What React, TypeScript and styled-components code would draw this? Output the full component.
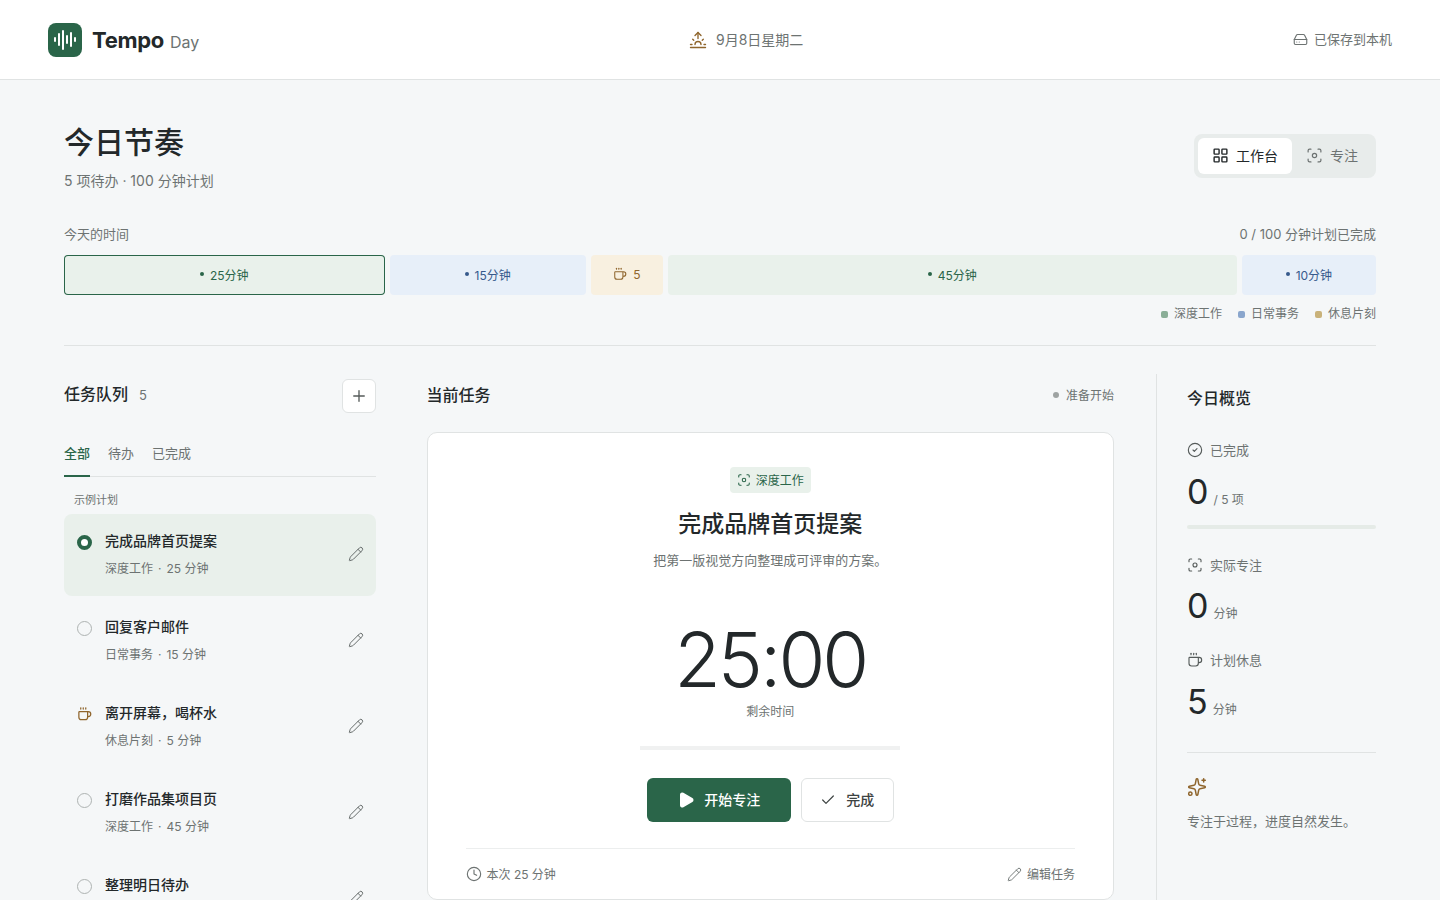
import * as React from 'react';
import styled, {createGlobalStyle} from 'styled-components';
import {
    AudioLines, Check, CircleCheck, Clock, Coffee, Focus, HardDrive, LayoutGrid,
    Pencil, Play, Plus, Sparkles, Sunrise,
} from 'lucide-react';

const GREEN = '#2a6549';
const INK = '#23282a';
const MUTED = '#6d7372';
const LINE = '#e0e3e3';
const BROWN = '#8f652c';

const Global = createGlobalStyle`
    html, body {
        margin: 0;
        height: 100%;
        overflow: hidden;
        background: #f5f7f8;
        color: ${INK};
        font-family: Inter, "Noto Sans CJK SC", sans-serif;
    }
    * { box-sizing: border-box; }
`;

const Page = styled.div`
    height: 100vh;
    overflow: hidden;
`;

const Header = styled.header`
    height: 80px;
    padding: 0 48px;
    display: flex;
    align-items: center;
    justify-content: space-between;
    background: #fff;
    border-bottom: 1px solid ${LINE};
`;

const Brand = styled.div`
    display: flex;
    align-items: center;
    gap: 10px;
`;

const LogoMark = styled.div`
    width: 34px;
    height: 34px;
    border-radius: 8px;
    background: ${GREEN};
    color: #fff;
    display: flex;
    align-items: center;
    justify-content: center;
`;

const BrandName = styled.div`
    font-size: 22px;
    font-weight: 700;
    letter-spacing: -0.3px;
    padding-top: 1px;
    span {
        margin-left: 6px;
        font-size: 16px;
        font-weight: 400;
        letter-spacing: 0;
        color: ${MUTED};
    }
`;

const HeaderDate = styled.div`
    padding-bottom: 2px;
    display: flex;
    align-items: center;
    gap: 9px;
    font-size: 14px;
    color: ${MUTED};
    svg {
        margin-top: 2px;
        color: ${BROWN};
    }
`;

const SavedNote = styled.div`
    padding-bottom: 2px;
    display: flex;
    align-items: center;
    gap: 6px;
    font-size: 13px;
    color: ${MUTED};
    svg { margin-top: 2px; }
`;

const Main = styled.main`
    padding: 44px 64px 0;
`;

const TitleRow = styled.div`
    display: flex;
    align-items: flex-start;
    justify-content: space-between;
`;

const PageTitle = styled.h1`
    margin: 0;
    font-size: 30px;
    line-height: 36px;
    font-weight: 500;
`;

const PageSub = styled.div`
    margin-top: 11px;
    font-size: 14px;
    line-height: 20px;
    color: ${MUTED};
`;

const ViewSwitch = styled.div`
    margin-top: 10px;
    display: flex;
    padding: 4px;
    border-radius: 8px;
    background: #e8eceb;
`;

const ViewButton = styled.div<{$active?: boolean}>`
    height: 36px;
    padding: 0 14px 3px;
    display: flex;
    align-items: center;
    gap: 7px;
    border-radius: 6px;
    font-size: 14px;
    background: ${p => (p.$active ? '#fff' : 'transparent')};
    color: ${p => (p.$active ? INK : MUTED)};
    svg { margin-top: 2px; }
`;

const TimelineHead = styled.div`
    margin-top: 34px;
    display: flex;
    justify-content: space-between;
    font-size: 13px;
    line-height: 18px;
    color: ${MUTED};
`;

const Timeline = styled.div`
    margin-top: 12px;
    display: flex;
    gap: 5px;
`;

const kinds = {
    deep: {bg: '#e9f1eb', fg: GREEN, dot: '#8aae97'},
    daily: {bg: '#e7eff9', fg: '#36598c', dot: '#8aa6cd'},
    rest: {bg: '#f8f0e0', fg: BROWN, dot: '#c9b27a'},
};
type Kind = keyof typeof kinds;

const Segment = styled.div<{$kind: Kind; $grow: number; $active?: boolean}>`
    flex: ${p => p.$grow} 1 0;
    height: 40px;
    padding: 0 5px 2px;
    display: flex;
    align-items: center;
    justify-content: center;
    gap: 6px;
    border-radius: 4px;
    font-size: 12px;
    background: ${p => kinds[p.$kind].bg};
    color: ${p => kinds[p.$kind].fg};
    box-shadow: ${p => (p.$active ? `inset 0 0 0 1px ${GREEN}` : 'none')};
`;

const SegmentDot = styled.i`
    width: 4px;
    height: 4px;
    border-radius: 50%;
    background: currentColor;
`;

const Legend = styled.div`
    margin-top: 11px;
    display: flex;
    justify-content: flex-end;
    gap: 16px;
    font-size: 12px;
    line-height: 16px;
    color: ${MUTED};
`;

const LegendItem = styled.div`
    display: flex;
    align-items: center;
    gap: 6px;
`;

const LegendSwatch = styled.i<{$kind: Kind}>`
    width: 7px;
    height: 7px;
    border-radius: 2px;
    background: ${p => kinds[p.$kind].dot};
`;

const Divider = styled.hr`
    margin: 23px 0 0;
    border: 0;
    border-top: 1px solid ${LINE};
`;

const Columns = styled.div`
    margin-top: 28px;
    display: flex;
    align-items: stretch;
`;

const Queue = styled.div`
    width: 312px;
    flex: none;
`;

const Current = styled.div`
    width: 687.5px;
    flex: none;
    margin: 0 42px 0 50.5px;
`;

const QueueHead = styled.div`
    margin-top: 5px;
    height: 34px;
    display: flex;
    align-items: center;
    justify-content: space-between;
`;

const SectionTitle = styled.h2`
    margin: 0 0 3px;
    font-size: 16px;
    line-height: 22px;
    font-weight: 500;
    small {
        margin-left: 11px;
        font-size: 13px;
        font-weight: 400;
        color: ${MUTED};
    }
`;

const AddButton = styled.div`
    width: 34px;
    height: 34px;
    display: flex;
    align-items: center;
    justify-content: center;
    border: 1px solid ${LINE};
    border-radius: 6px;
    background: #fff;
    color: #555b5a;
`;

const Tabs = styled.div`
    margin-top: 31px;
    display: flex;
    gap: 18px;
    border-bottom: 1px solid ${LINE};
`;

const Tab = styled.div<{$active?: boolean}>`
    padding-bottom: 13px;
    margin-bottom: -1px;
    font-size: 13px;
    line-height: 18px;
    font-weight: ${p => (p.$active ? 500 : 400)};
    color: ${p => (p.$active ? GREEN : MUTED)};
    border-bottom: 2px solid ${p => (p.$active ? GREEN : 'transparent')};
`;

const GroupLabel = styled.div`
    margin: 16px 0 7px 10px;
    font-size: 11px;
    line-height: 14px;
    color: ${MUTED};
`;

const TaskList = styled.div`
    display: flex;
    flex-direction: column;
    gap: 4px;
`;

const TaskRow = styled.div<{$active?: boolean}>`
    height: 82px;
    padding: 16px 12px 0 13px;
    display: flex;
    gap: 13px;
    border-radius: 8px;
    background: ${p => (p.$active ? '#e9f0eb' : 'transparent')};
`;

const TaskMark = styled.div`
    width: 15px;
    height: 24px;
    flex: none;
    display: flex;
    align-items: center;
    justify-content: center;
    color: ${BROWN};
`;

const Radio = styled.i<{$on?: boolean}>`
    width: 15px;
    height: 15px;
    border-radius: 50%;
    border: ${p => (p.$on ? `4.5px solid ${GREEN}` : '1px solid #aeb3b2')};
    background: ${p => (p.$on ? '#fff' : 'transparent')};
`;

const TaskBody = styled.div`
    flex: 1;
`;

const TaskTitle = styled.div`
    font-size: 14px;
    line-height: 22px;
    font-weight: 500;
`;

const TaskMeta = styled.div`
    margin-top: 6px;
    font-size: 12px;
    line-height: 22px;
    color: ${MUTED};
    b {
        margin: 0 5px;
        font-weight: 400;
    }
`;

const EditIcon = styled.div`
    align-self: center;
    margin-top: -18px;
    display: flex;
    color: #666c6b;
`;

const CurrentHead = styled.div`
    margin-top: 5px;
    height: 34px;
    display: flex;
    align-items: center;
    justify-content: space-between;
`;

const Status = styled.div`
    padding-bottom: 3px;
    display: flex;
    align-items: center;
    gap: 7px;
    font-size: 12px;
    color: ${MUTED};
    &::before {
        content: "";
        width: 6px;
        height: 6px;
        border-radius: 50%;
        background: #9ea3a2;
    }
`;

const Card = styled.section`
    margin-top: 19px;
    padding: 34px 38px 0;
    display: flex;
    flex-direction: column;
    align-items: center;
    background: #fff;
    border: 1px solid ${LINE};
    border-radius: 10px;
`;

const Badge = styled.div`
    height: 26px;
    padding: 0 7px 1px;
    display: flex;
    align-items: center;
    gap: 5px;
    border-radius: 4px;
    font-size: 12px;
    background: #e9f1eb;
    color: ${GREEN};
`;

const TaskHeading = styled.h3`
    margin: 15px 0 0;
    font-size: 23px;
    line-height: 32px;
    font-weight: 500;
`;

const TaskDesc = styled.p`
    margin: 10px 0 0;
    font-size: 13px;
    line-height: 20px;
    color: ${MUTED};
`;

const Timer = styled.div`
    margin-top: 45px;
    font-size: 76px;
    line-height: 88px;
    font-weight: 300;
    letter-spacing: -3px;
`;

const TimerLabel = styled.div`
    margin-top: 0;
    font-size: 12px;
    line-height: 18px;
    color: ${MUTED};
`;

const TimerTrack = styled.div`
    margin-top: 25px;
    width: 260px;
    height: 4px;
    background: #f0f1f1;
`;

const Actions = styled.div`
    margin-top: 28px;
    display: flex;
    gap: 10px;
`;

const ActionButton = styled.div<{$primary?: boolean}>`
    width: ${p => (p.$primary ? '144px' : '93px')};
    height: 44px;
    padding-bottom: 3px;
    display: flex;
    align-items: center;
    justify-content: center;
    gap: ${p => (p.$primary ? '9px' : '10px')};
    border-radius: 6px;
    font-size: 14px;
    font-weight: 500;
    background: ${p => (p.$primary ? GREEN : '#fff')};
    color: ${p => (p.$primary ? '#fff' : '#3d4342')};
    border: ${p => (p.$primary ? 'none' : `1px solid ${LINE}`)};
    svg { margin-top: 2px; }
`;

const CardFoot = styled.div`
    margin-top: 26px;
    align-self: stretch;
    height: 51px;
    padding-bottom: 2px;
    display: flex;
    align-items: center;
    justify-content: space-between;
    border-top: 1px solid #eceeee;
    font-size: 12px;
    color: ${MUTED};
`;

const FootItem = styled.div`
    display: flex;
    align-items: center;
    gap: 5px;
    svg { margin-top: 2px; }
`;

const Overview = styled.aside`
    flex: 1;
    padding: 13px 0 0 30px;
    min-height: 600px;
    border-left: 1px solid ${LINE};
`;

const StatLabel = styled.div<{$gap: number}>`
    margin-top: ${p => p.$gap}px;
    display: flex;
    align-items: center;
    gap: 7px;
    font-size: 13px;
    line-height: 18px;
    color: ${MUTED};
    svg { color: #555b5a; }
`;

const StatValue = styled.div`
    margin-top: 12.5px;
    display: flex;
    align-items: baseline;
    gap: 5px;
    font-size: 34px;
    line-height: 40px;
    small {
        font-size: 12px;
        color: ${MUTED};
    }
`;

const StatBar = styled.div`
    margin-top: 5px;
    height: 4px;
    border-radius: 2px;
    background: #e5ebe7;
`;

const OverviewRule = styled.div`
    margin-top: 22px;
    border-top: 1px solid ${LINE};
`;

const Tip = styled.div`
    margin-top: 24px;
    color: ${BROWN};
    display: flex;
`;

const TipText = styled.div`
    margin-top: 14px;
    font-size: 13px;
    line-height: 20px;
    color: ${MUTED};
`;

const tasks = [
    {title: '完成品牌首页提案', kind: '深度工作', mins: '25 分钟', on: true},
    {title: '回复客户邮件', kind: '日常事务', mins: '15 分钟'},
    {title: '离开屏幕，喝杯水', kind: '休息片刻', mins: '5 分钟', rest: true},
    {title: '打磨作品集项目页', kind: '深度工作', mins: '45 分钟'},
    {title: '整理明日待办', kind: '日常事务', mins: '10 分钟'},
];

export default function App() {
    return (
        <Page>
            <Global />
            <Header>
                <Brand>
                    <LogoMark><AudioLines size={24} strokeWidth={2} /></LogoMark>
                    <BrandName>Tempo<span>Day</span></BrandName>
                </Brand>
                <HeaderDate><Sunrise size={18} strokeWidth={1.8} />9月8日星期二</HeaderDate>
                <SavedNote><HardDrive size={15} strokeWidth={1.8} />已保存到本机</SavedNote>
            </Header>
            <Main>
                <TitleRow>
                    <div>
                        <PageTitle>今日节奏</PageTitle>
                        <PageSub>5 项待办 · 100 分钟计划</PageSub>
                    </div>
                    <ViewSwitch>
                        <ViewButton $active><LayoutGrid size={17} strokeWidth={2} />工作台</ViewButton>
                        <ViewButton><Focus size={17} strokeWidth={1.7} />专注</ViewButton>
                    </ViewSwitch>
                </TitleRow>

                <TimelineHead>
                    <span>今天的时间</span>
                    <span>0 / 100 分钟计划已完成</span>
                </TimelineHead>
                <Timeline>
                    <Segment $kind="deep" $grow={25} $active><SegmentDot />25分钟</Segment>
                    <Segment $kind="daily" $grow={15}><SegmentDot />15分钟</Segment>
                    <Segment $kind="rest" $grow={5}><Coffee size={14} strokeWidth={1.8} />5</Segment>
                    <Segment $kind="deep" $grow={45}><SegmentDot />45分钟</Segment>
                    <Segment $kind="daily" $grow={10}><SegmentDot />10分钟</Segment>
                </Timeline>
                <Legend>
                    <LegendItem><LegendSwatch $kind="deep" />深度工作</LegendItem>
                    <LegendItem><LegendSwatch $kind="daily" />日常事务</LegendItem>
                    <LegendItem><LegendSwatch $kind="rest" />休息片刻</LegendItem>
                </Legend>
                <Divider />

                <Columns>
                    <Queue>
                        <QueueHead>
                            <SectionTitle>任务队列<small>5</small></SectionTitle>
                            <AddButton><Plus size={18} strokeWidth={1.8} /></AddButton>
                        </QueueHead>
                        <Tabs>
                            <Tab $active>全部</Tab>
                            <Tab>待办</Tab>
                            <Tab>已完成</Tab>
                        </Tabs>
                        <GroupLabel>示例计划</GroupLabel>
                        <TaskList>
                            {tasks.map(task => (
                                <TaskRow key={task.title} $active={task.on}>
                                    <TaskMark>
                                        {task.rest
                                            ? <Coffee size={16} strokeWidth={2} />
                                            : <Radio $on={task.on} />}
                                    </TaskMark>
                                    <TaskBody>
                                        <TaskTitle>{task.title}</TaskTitle>
                                        <TaskMeta>{task.kind}<b>·</b>{task.mins}</TaskMeta>
                                    </TaskBody>
                                    <EditIcon><Pencil size={16} strokeWidth={1.5} /></EditIcon>
                                </TaskRow>
                            ))}
                        </TaskList>
                    </Queue>

                    <Current>
                        <CurrentHead>
                            <SectionTitle>当前任务</SectionTitle>
                            <Status>准备开始</Status>
                        </CurrentHead>
                        <Card>
                            <Badge><Focus size={14} strokeWidth={1.8} />深度工作</Badge>
                            <TaskHeading>完成品牌首页提案</TaskHeading>
                            <TaskDesc>把第一版视觉方向整理成可评审的方案。</TaskDesc>
                            <Timer>25:00</Timer>
                            <TimerLabel>剩余时间</TimerLabel>
                            <TimerTrack />
                            <Actions>
                                <ActionButton $primary><Play size={18} fill="currentColor" />开始专注</ActionButton>
                                <ActionButton><Check size={16} strokeWidth={1.8} />完成</ActionButton>
                            </Actions>
                            <CardFoot>
                                <FootItem><Clock size={16} strokeWidth={1.7} />本次 25 分钟</FootItem>
                                <FootItem><Pencil size={15} strokeWidth={1.5} />编辑任务</FootItem>
                            </CardFoot>
                        </Card>
                    </Current>

                    <Overview>
                        <SectionTitle>今日概览</SectionTitle>
                        <StatLabel $gap={32}><CircleCheck size={16} strokeWidth={1.7} />已完成</StatLabel>
                        <StatValue>0<small>/ 5 项</small></StatValue>
                        <StatBar />
                        <StatLabel $gap={27}><Focus size={16} strokeWidth={1.7} />实际专注</StatLabel>
                        <StatValue>0<small>分钟</small></StatValue>
                        <StatLabel $gap={17}><Coffee size={16} strokeWidth={1.7} />计划休息</StatLabel>
                        <StatValue>5<small>分钟</small></StatValue>
                        <OverviewRule />
                        <Tip><Sparkles size={20} strokeWidth={1.8} /></Tip>
                        <TipText>专注于过程，进度自然发生。</TipText>
                    </Overview>
                </Columns>
            </Main>
        </Page>
    );
}
